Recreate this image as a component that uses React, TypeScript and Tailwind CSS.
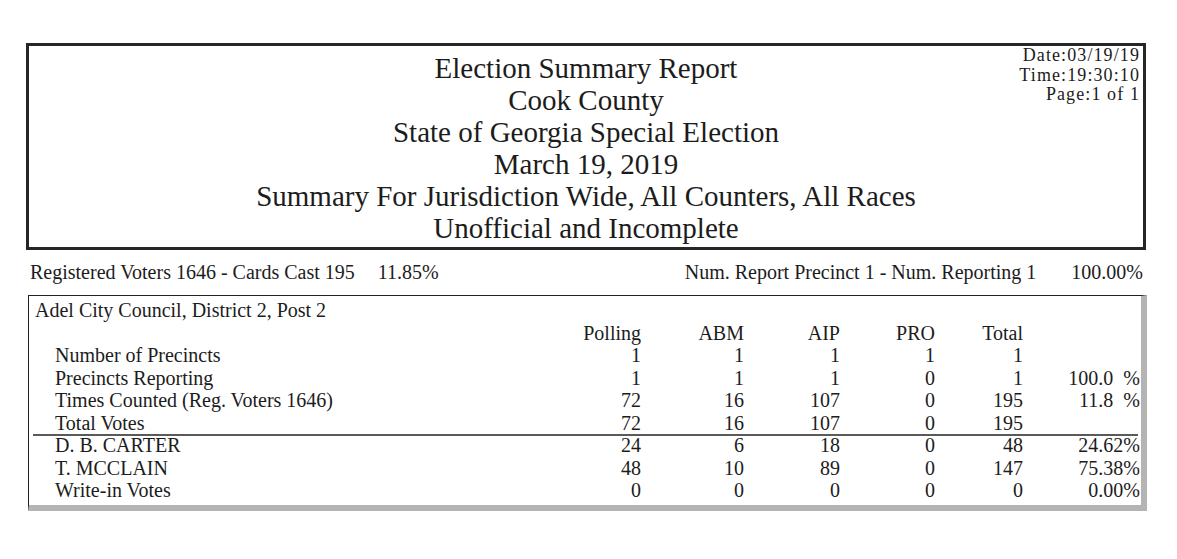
import React from "react";

const serif = { fontFamily: '"Liberation Serif", "Times New Roman", serif' };

type Row = { label: string; v: string[]; pct: string };

const top: Row[] = [
  { label: "Number of Precincts", v: ["1", "1", "1", "1", "1"], pct: "" },
  { label: "Precincts Reporting", v: ["1", "1", "1", "0", "1"], pct: "100.0  %" },
  { label: "Times Counted (Reg. Voters 1646)", v: ["72", "16", "107", "0", "195"], pct: "11.8  %" },
  { label: "Total Votes", v: ["72", "16", "107", "0", "195"], pct: "" },
];

const cands: Row[] = [
  { label: "D. B. CARTER", v: ["24", "6", "18", "0", "48"], pct: "24.62%" },
  { label: "T. MCCLAIN", v: ["48", "10", "89", "0", "147"], pct: "75.38%" },
  { label: "Write-in Votes", v: ["0", "0", "0", "0", "0"], pct: "0.00%" },
];

const gridCls =
  "grid grid-cols-[532px_80px_103px_96px_95px_88px_117px] h-[22.5px] leading-[22.5px]";

function DataRow({ r }: { r: Row }) {
  return (
    <div className={gridCls}>
      <div className="pl-[26px] whitespace-nowrap">{r.label}</div>
      {r.v.map((x, i) => (
        <div key={i} className="text-right">
          {x}
        </div>
      ))}
      <div className="text-right whitespace-pre">{r.pct}</div>
    </div>
  );
}

export default function App() {
  return (
    <div className="w-[1177px] h-[559px] bg-white text-[#1c1c1c] overflow-hidden" style={serif}>
      <div className="pt-[43px] pl-[26px] w-[1146px]">
        {/* Header box */}
        <div className="relative border-[3px] border-[#262626] pt-[6px] pb-[3px] text-center text-[29px] leading-[32px]">
          <div>Election Summary Report</div>
          <div>Cook County</div>
          <div>State of Georgia Special Election</div>
          <div>March 19, 2019</div>
          <div>Summary For Jurisdiction Wide, All Counters, All Races</div>
          <div>Unofficial and Incomplete</div>
          <div className="absolute top-0 right-[3px] text-right text-[18px] leading-[19.5px] tracking-[1.1px]">
            <div>Date:03/19/19</div>
            <div>Time:19:30:10</div>
            <div>Page:1 of 1</div>
          </div>
        </div>

        {/* Summary line */}
        <div className="mt-[11px] flex justify-between pl-[4px] pr-[3px] text-[20px] leading-[22px]">
          <div className="flex gap-[23px]">
            <span>Registered Voters 1646 - Cards Cast 195</span>
            <span>11.85%</span>
          </div>
          <div className="flex gap-[35px]">
            <span>Num. Report Precinct 1 - Num. Reporting 1</span>
            <span>100.00%</span>
          </div>
        </div>

        {/* Table */}
        <div className="mt-[12px] ml-[2px] w-[1119px] border-l border-t border-l-[#222] border-t-[#222] border-r-[6px] border-b-[6px] border-r-[#b4b4b4] border-b-[#b4b4b4] pt-[3px] pb-[3px] text-[20px]">
          <div className="h-[22.5px] leading-[22.5px] pl-[6px]">Adel City Council, District 2, Post 2</div>
          <div className={gridCls}>
            <div></div>
            <div className="text-right">Polling</div>
            <div className="text-right">ABM</div>
            <div className="text-right">AIP</div>
            <div className="text-right">PRO</div>
            <div className="text-right">Total</div>
            <div></div>
          </div>
          {top.map((r) => (
            <DataRow key={r.label} r={r} />
          ))}
          <div className="ml-[4px] mr-[3px] h-[1.5px] bg-[#5a5a5a] -mb-[1.5px]"></div>
          {cands.map((r) => (
            <DataRow key={r.label} r={r} />
          ))}
        </div>
      </div>
    </div>
  );
}
